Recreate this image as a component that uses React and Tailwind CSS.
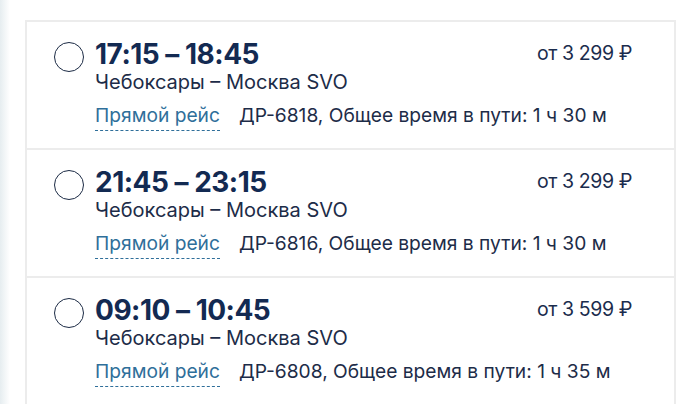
import React from "react";

const flights = [
  { time: "17:15 – 18:45", code: "ДР-6818", duration: "1 ч 30 м", price: "3 299" },
  { time: "21:45 – 23:15", code: "ДР-6816", duration: "1 ч 30 м", price: "3 299" },
  { time: "09:10 – 10:45", code: "ДР-6808", duration: "1 ч 35 м", price: "3 599" },
];

function FlightRow({ flight, last }) {
  return (
    <div
      className={`flex items-start h-[128px] pl-[27px] pr-[42px] pt-[15px] ${
        last ? "" : "border-b-2 border-[#ececec]"
      }`}
    >
      <div className="w-[30px] h-[30px] mt-[5px] rounded-full border-[1.5px] border-[#1c2b45] shrink-0"></div>
      <div className="ml-[11px] flex-1 min-w-0 whitespace-nowrap">
        <div className="text-[28px] leading-[34px] font-bold text-[#132a52] tracking-[-0.5px]">
          {flight.time}
        </div>
        <div className="text-[20px] leading-[24px] text-[#1d2c48] -mt-[1px]">
          Чебоксары – Москва SVO
        </div>
        <div className="flex items-baseline text-[19.2px] leading-[24px] mt-[9px]">
          <span className="text-[#2f6f9a] border-b border-dashed border-[#2f6f9a] pb-[3px]">
            Прямой рейс
          </span>
          <span className="ml-[19px] text-[#1d2c48]">
            {flight.code}, Общее время в пути: {flight.duration}
          </span>
        </div>
      </div>
      <div className="shrink-0 whitespace-nowrap text-[19.5px] leading-[28px] tracking-[-0.4px] text-[#1b2c4d] mt-[2px]">
        от {flight.price} ₽
      </div>
    </div>
  );
}

export default function App() {
  return (
    <div
      className="relative w-[700px] h-[404px] bg-white overflow-hidden"
      style={{ fontFamily: "Inter, 'Noto Sans', sans-serif" }}
    >
      <div className="absolute left-0 top-0 bottom-0 w-[10px] bg-gradient-to-r from-[#e6edf0] to-white"></div>
      <div className="pt-[20px] pl-[25px]">
        <div className="w-[651px] border-2 border-[#ececec] border-b-0 bg-white">
          {flights.map((f, i) => (
            <FlightRow key={i} flight={f} last={i === flights.length - 1} />
          ))}
        </div>
      </div>
    </div>
  );
}
